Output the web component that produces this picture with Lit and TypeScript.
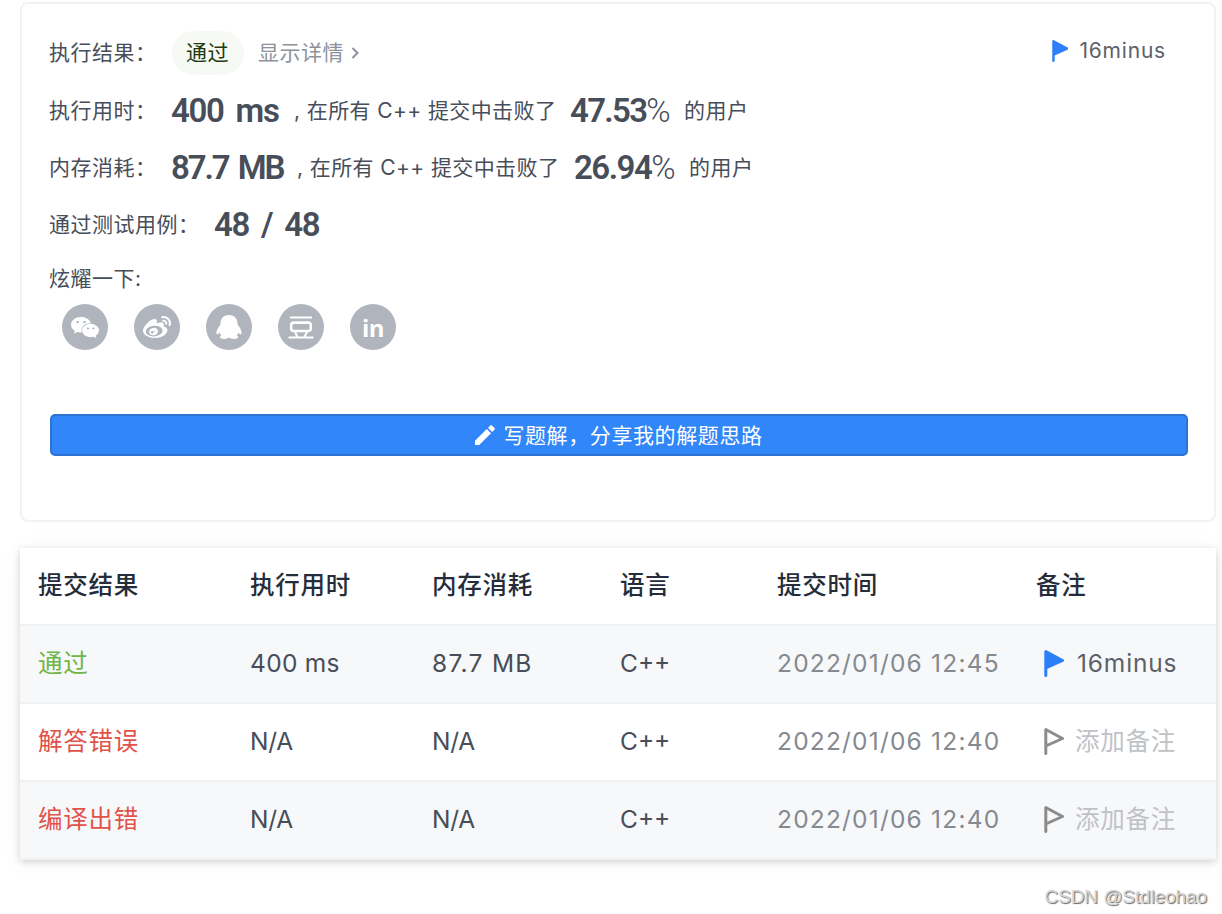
import { LitElement, html, css, svg } from "lit";
import { customElement, property } from "lit/decorators.js";

const wechat = svg`<svg class="glyph" viewBox="13 32 550 448" width="28" height="21" preserveAspectRatio="none"><path fill="#fff" d="M385.2 167.6c6.4 0 12.6.3 18.8 1.1C387.4 90.3 303.3 32 207.7 32 100.5 32 13 104.8 13 197.4c0 53.4 29.3 97.5 77.9 131.6l-19.3 58.6 68-34.1c24.4 4.8 43.8 9.7 68.2 9.7 6.2 0 12.1-.3 18.3-.8-4-12.9-6.2-26.6-6.2-40.8-.1-84.9 72.9-154 165.3-154zm-104.5-52.9c14.5 0 24.2 9.7 24.2 24.4 0 14.5-9.7 24.2-24.2 24.2-14.8 0-29.3-9.7-29.3-24.2.1-14.7 14.6-24.4 29.3-24.4zm-136.4 48.6c-14.5 0-29.3-9.7-29.3-24.2 0-14.8 14.8-24.4 29.3-24.4 14.8 0 24.4 9.7 24.4 24.4 0 14.6-9.6 24.2-24.4 24.2zM563 319.4c0-77.9-77.9-141.3-165.4-141.3-92.7 0-165.4 63.4-165.4 141.3S305 460.7 397.6 460.7c19.3 0 38.9-5.1 58.6-9.9l53.4 29.3-14.8-48.6C534 402.1 563 363.2 563 319.4zm-219.1-24.5c-9.7 0-19.3-9.7-19.3-19.6 0-9.7 9.7-19.3 19.3-19.3 14.8 0 24.4 9.7 24.4 19.3 0 10-9.7 19.6-24.4 19.6zm107.1 0c-9.7 0-19.3-9.7-19.3-19.6 0-9.7 9.7-19.3 19.3-19.3 14.5 0 24.4 9.7 24.4 19.3.1 10-9.9 19.6-24.4 19.6z"/></svg>`;

const weibo = svg`<svg class="glyph" viewBox="0 32 512 415" width="28" height="22" preserveAspectRatio="none"><path fill="#fff" d="M407 177.6c7.6-24-13.4-46.8-37.4-41.7-22 4.8-28.8-28.1-7.1-32.8 50.1-10.9 92.3 37.1 76.5 84.8-6.8 21.2-38.8 10.8-32-10.3zM214.8 446.7C108.5 446.7 0 395.3 0 310.4c0-44.3 28-95.4 76.3-143.7C176 67 279.5 65.8 249.9 161c-4 13.1 12.3 5.7 12.3 6 79.5-33.6 140.5-16.8 114 51.4-3.7 9.4 1.1 10.9 8.3 13.1 135.7 42.3 34.8 215.2-169.7 215.2zm143.7-146.3c-5.4-55.7-78.5-94-163.4-85.7-84.8 8.6-148.8 60.3-143.4 116s78.5 94 163.4 85.7c84.8-8.6 148.8-60.3 143.4-116zM347.9 35.1c-25.9 5.6-16.8 43.7 8.3 38.3 72.3-15.2 134.8 52.8 111.7 124-7.4 24.2 29.1 37 37.4 12 31.9-99.8-55.1-195.9-157.4-174.3zm-78.5 311c-17.1 38.8-66.8 60-109.1 46.3-40.8-13.1-58-53.4-40.3-89.7 17.7-35.4 63.1-55.4 103.4-45.1 42 10.8 63.1 50.2 46 88.5zm-86.3-30c-12.9-5.4-30 .3-38 12.9-8.3 12.9-4.3 28 8.6 34 13.1 6 30.8.3 39.1-12.9 8-13.1 3.7-28.3-9.7-34zm32.6-13.4c-5.1-1.7-11.4.6-14.3 5.4-2.9 5.1-1.4 10.6 3.7 12.9 5.1 2 11.7-.3 14.6-5.4 2.8-5.2 1.1-10.9-4-12.9z"/></svg>`;

const qq = svg`<svg class="glyph" viewBox="0 0 26 24" width="26" height="24"><path fill="#fff" d="M13 0C8.300 0 4.700 3.200 4.600 7.400c0 1-.2 2-.8 3.100C1.900 13 .400 15.500.400 17.600c0 1.200.300 1.900.900 1.900.700 0 1.500-.8 2.200-1.900.4 1.200 1 2.200 1.900 3-1 .3-1.500.8-1.500 1.500 0 1.200 1.900 1.900 4.300 1.900 2.100 0 3.800-.5 4.800-1.400 1 .9 2.700 1.400 4.800 1.400 2.400 0 4.300-.7 4.300-1.900 0-.7-.5-1.200-1.500-1.500.9-.8 1.500-1.800 1.900-3 .7 1.100 1.500 1.900 2.200 1.900.6 0 .9-.7.9-1.900 0-2.100-1.500-4.600-3.400-7.100-.6-1.100-.8-2.100-.8-3.100C21.300 3.200 17.700 0 13 0z"/></svg>`;

const douban = svg`<svg class="glyph" viewBox="0 0 26 23" width="26" height="23"><g fill="none" stroke="#fff" stroke-width="2"><path d="M2 1.500h22M.500 21.500h25M7 16l2.500 5M19 16l-2.500 5"/><rect x="3.200" y="6.600" width="19.600" height="8.400" rx="2.500" stroke-width="2.600"/></g></svg>`;

const SANS = css`Inter, "Noto Sans CJK SC", sans-serif`;

@customElement("note-flag")
class NoteFlag extends LitElement {
  @property({ type: Boolean }) filled = false;
  @property({ type: Number }) size = 27;

  static styles = css`
    :host { display: block; flex: none; }
    svg { display: block; }
  `;

  render() {
    const ink = this.filled ? "#2d7ff9" : "#8c8c8c";
    return html`<svg viewBox="0 0 20 27" width=${(this.size * 20) / 27} height=${this.size}>
      <path d="M1.800 25.500V1.500L18.500 10.500L1.800 18" fill=${this.filled ? ink : "none"} stroke=${ink}
        stroke-width="3" stroke-linecap="round" stroke-linejoin="round"/>
    </svg>`;
  }
}

@customElement("share-bar")
class ShareBar extends LitElement {
  static styles = css`
    :host { display: flex; gap: 26px; padding-left: 12px; }
    .dot { width: 46px; height: 46px; border-radius: 50%; background: #afb4bd; display: grid; place-items: center; }
    .glyph { display: block; }
    .in { font: 700 24px/30px "Open Sans", sans-serif; letter-spacing: -0.5px; padding-top: 2px; color: #fff; }
  `;

  render() {
    return html`
      ${[wechat, weibo, qq, douban].map((g) => html`<div class="dot">${g}</div>`)}
      <div class="dot"><span class="in">in</span></div>
    `;
  }
}

interface Submission {
  result: string;
  ok: boolean;
  time: string;
  memory: string;
  date: string;
  note: string;
}

@customElement("submission-table")
class SubmissionTable extends LitElement {
  rows: Submission[] = [
    { result: "通过", ok: true, time: "400 ms", memory: "87.7 MB", date: "2022/01/06 12:45", note: "16minus" },
    { result: "解答错误", ok: false, time: "N/A", memory: "N/A", date: "2022/01/06 12:40", note: "" },
    { result: "编译出错", ok: false, time: "N/A", memory: "N/A", date: "2022/01/06 12:40", note: "" },
  ];

  static styles = css`
    :host {
      display: block;
      background: #fff;
      box-shadow: 0 2px 7px rgba(0, 0, 0, 0.16), 0 2px 26px rgba(0, 0, 0, 0.04);
      font: 400 24.500px/34px ${SANS};
      color: #474d59;
    }
    .row {
      display: grid;
      grid-template-columns: 212px 182px 188px 157px 259px 1fr;
      align-items: center;
      box-sizing: border-box;
      height: 78px;
      padding: 0 0 2px 18px;
      border-bottom: 2px solid #f0f1f2;
      white-space: nowrap;
    }
    .row:nth-child(even) { background: #f7f8fa; }
    .head { font-weight: 500; color: #262d3a; }
    .cjk { letter-spacing: 0.75px; }
    .ok { color: #6fb544; }
    .bad { color: #e0524a; }
    .time { letter-spacing: 0.3px; }
    .mem { letter-spacing: 1.3px; }
    .time.na, .mem.na { letter-spacing: -0.2px; }
    .date { color: #858990; letter-spacing: 1.2px; }
    .note { display: flex; align-items: center; padding-left: 8px; }
    .named { margin-left: 13px; color: #5c606b; letter-spacing: 0.85px; }
    .empty { margin-left: 11px; color: #c0c2c7; }
  `;

  render() {
    return html`
      <div class="row head cjk">
        ${["提交结果", "执行用时", "内存消耗", "语言", "提交时间", "备注"].map((h) => html`<span>${h}</span>`)}
      </div>
      ${this.rows.map(
        (r) => html`<div class="row">
          <span class="cjk ${r.ok ? "ok" : "bad"}">${r.result}</span>
          <span class="time ${r.ok ? "" : "na"}">${r.time}</span>
          <span class="mem ${r.ok ? "" : "na"}">${r.memory}</span>
          <span>C++</span>
          <span class="date">${r.date}</span>
          <div class="note">
            <note-flag ?filled=${!!r.note}></note-flag>
            ${r.note ? html`<span class="named">${r.note}</span>` : html`<span class="empty cjk">添加备注</span>`}
          </div>
        </div>`
      )}
    `;
  }
}

@customElement("app-root")
class AppRoot extends LitElement {
  static styles = css`
    :host {
      display: block;
      box-sizing: border-box;
      height: 914px;
      padding: 2px 6px 0 20px;
      overflow: hidden;
      background: #fff;
      font: 400 21px/30px ${SANS};
      color: #474d59;
    }
    .card {
      box-sizing: border-box;
      width: 1196px;
      height: 520px;
      border: 2px solid #f1f2f3;
      border-radius: 8px;
      padding: 19px 26px 0 27px;
    }
    .line { display: flex; align-items: center; height: 58px; white-space: nowrap; letter-spacing: 0.5px; }
    .line > * { flex: none; }
    .first { padding-top: 1px; box-sizing: border-box; }
    .label { width: 122px; }
    .pill {
      box-sizing: border-box;
      width: 72px;
      height: 44px;
      margin-left: 1px;
      padding-left: 14px;
      line-height: 44px;
      border-radius: 22px;
      background: #f7faf4;
      color: #1f3a12;
    }
    .detail { margin-left: 14px; display: flex; align-items: center; gap: 7px; color: #8d929d; }
    .owner { margin: -3px 22px 0 auto; display: flex; align-items: center; gap: 11px; color: #5c606b; letter-spacing: 0.8px; }
    .num { font: 600 33px/40px Roboto, sans-serif; letter-spacing: -1.3px; word-spacing: 5px; color: #474d59; }
    .pct { font-weight: 300; letter-spacing: -2px; }
    .w-time { width: 123px; }
    .w-mem { width: 126px; letter-spacing: -2.1px; word-spacing: 3px; }
    .beat { width: 276px; letter-spacing: 0.4px; }
    .beat-b { width: 277px; letter-spacing: 0.4px; }
    .rate-a { width: 114px; letter-spacing: -1.7px; }
    .rate-b { width: 115px; letter-spacing: -1.500px; }
    .cases { width: 165px; }
    .third { height: 57px; }
    .fourth { height: 57px; }
    .brag { height: 49px; margin-top: 2px; padding-bottom: 1px; box-sizing: border-box; }
    share-bar { margin-left: 1px; }
    .cta {
      box-sizing: border-box;
      width: 1138px;
      height: 42px;
      margin: 64px 0 0 1px;
      display: flex;
      align-items: center;
      justify-content: center;
      gap: 8px;
      border: 2px solid #2d73d2;
      border-radius: 5px;
      background: #3186f9;
      color: #fff;
      letter-spacing: 0.6px;
    }
    .cta svg { display: block; }
    .cta span { padding-top: 2px; }
    submission-table { width: 1196px; margin-top: 26px; }
    .mark {
      margin-top: 22px;
      padding-right: 9px;
      text-align: right;
      font: 400 19px/30px "Liberation Sans", sans-serif;
      letter-spacing: -0.1px;
      color: #d6d6d6;
      text-shadow: 1px 1px 1px #666;
    }
  `;

  render() {
    return html`
      <section class="card">
        <div class="line first">
          <span class="label">执行结果：</span>
          <span class="pill">通过</span>
          <span class="detail">显示详情
            <svg width="8" height="12" viewBox="0 0 8 12"><path d="M1.500 1l5 5-5 5" fill="none" stroke="#8d929d" stroke-width="2"/></svg>
          </span>
          <span class="owner"><note-flag filled .size=${22}></note-flag>16minus</span>
        </div>
        <div class="line first">
          <span class="label">执行用时：</span>
          <span class="num w-time">400 ms</span>
          <span class="beat">, 在所有 C++ 提交中击败了</span>
          <span class="num rate-a">47.53<span class="pct">%</span></span>
          <span>的用户</span>
        </div>
        <div class="line third">
          <span class="label">内存消耗：</span>
          <span class="num w-mem">87.7 MB</span>
          <span class="beat-b">, 在所有 C++ 提交中击败了</span>
          <span class="num rate-b">26.94<span class="pct">%</span></span>
          <span>的用户</span>
        </div>
        <div class="line fourth">
          <span class="cases">通过测试用例：</span>
          <span class="num">48 / 48</span>
        </div>
        <div class="line brag">炫耀一下:</div>
        <share-bar></share-bar>
        <div class="cta">
          <svg width="20" height="20" viewBox="0 0 20 20"><path fill="#fff" d="M0 15.800V20h4.200L16 8.200 11.800 4zM19.600 4.600a1.200 1.200 0 0 0 0-1.600L17 .4a1.200 1.200 0 0 0-1.600 0l-2.400 2.400L17.200 7z"/></svg>
          <span>写题解，分享我的解题思路</span>
        </div>
      </section>
      <submission-table></submission-table>
      <div class="mark">CSDN @Stdleohao</div>
    `;
  }
}
